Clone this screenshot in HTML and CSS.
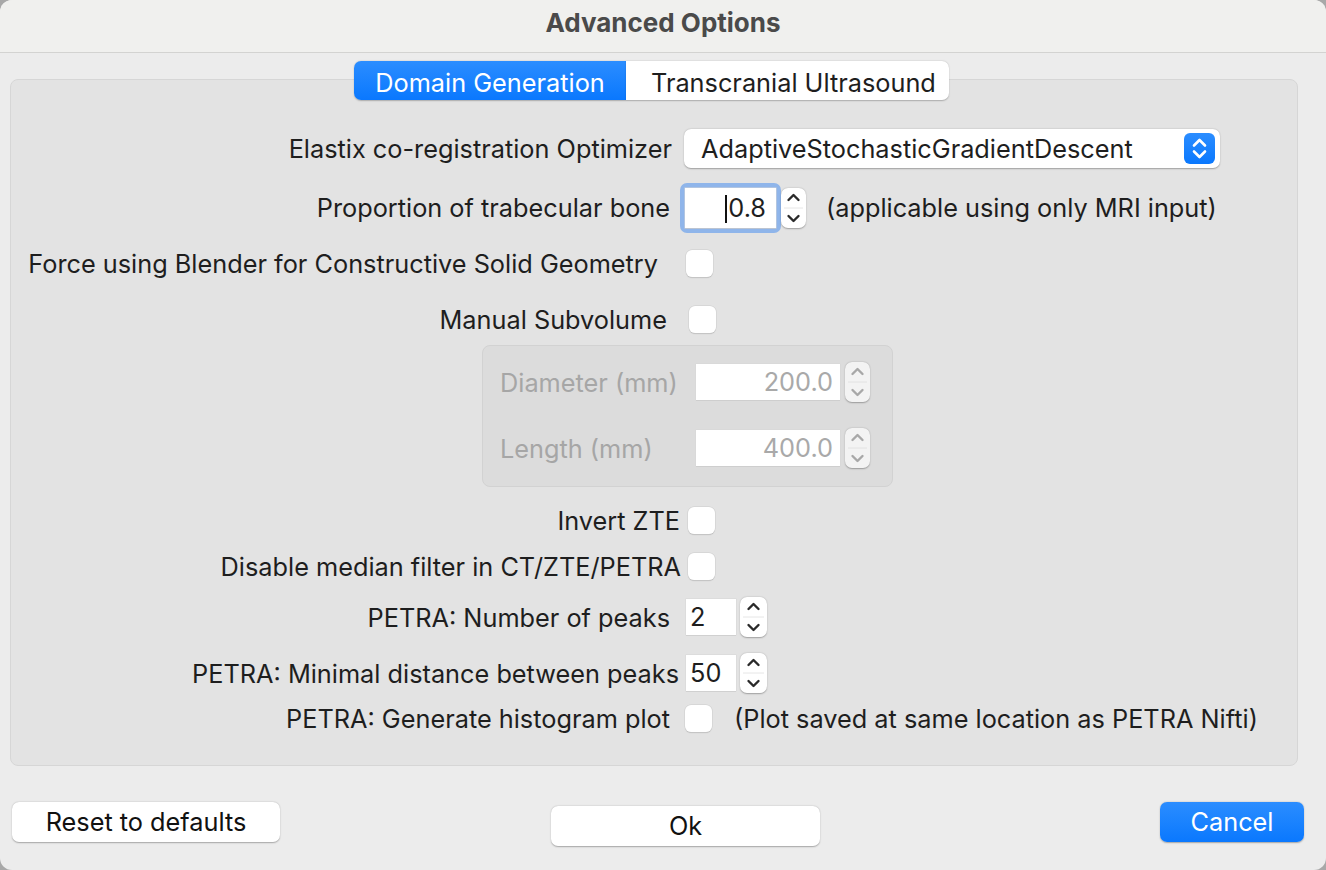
FILE: index.html
```html
<!DOCTYPE html>
<html>
<head>
<meta charset="utf-8">
<title>Advanced Options</title>
<link rel="stylesheet" href="styles.css">
</head>
<body>
<div class="window">
  <div class="titlebar">Advanced Options</div>
  <div class="content">
    <div class="tabs">
      <div class="tab active">Domain Generation</div>
      <div class="tab">Transcranial Ultrasound</div>
    </div>
    <div class="panel">
      <div class="row r-opt">
        <div class="lbl">Elastix co-registration Optimizer</div>
        <div class="combo">
          <span class="combo-text">AdaptiveStochasticGradientDescent</span>
          <span class="combo-btn">
            <svg width="31" height="31" viewBox="0 0 31 31"><path d="M10 12.5 L15.5 7 L21 12.5" fill="none" stroke="#fff" stroke-width="2.6" stroke-linecap="round" stroke-linejoin="round"/><path d="M10 18.5 L15.5 24 L21 18.5" fill="none" stroke="#fff" stroke-width="2.6" stroke-linecap="round" stroke-linejoin="round"/></svg>
          </span>
        </div>
      </div>

      <div class="row r-prop">
        <div class="lbl">Proportion of trabecular bone</div>
        <div class="focus">
          <div class="input num"><span class="caret"></span>0.8</div>
        </div>
        <div class="spin spin-prop">
          <svg width="25" height="40" viewBox="0 0 25 40"><path d="M7.5 12 L12.5 7 L17.5 12" fill="none" stroke="#2a2a2a" stroke-width="2.4" stroke-linecap="round" stroke-linejoin="round"/><line x1="3" y1="20" x2="22" y2="20" stroke="#e6e6e6" stroke-width="1"/><path d="M7.5 28 L12.5 33 L17.5 28" fill="none" stroke="#2a2a2a" stroke-width="2.4" stroke-linecap="round" stroke-linejoin="round"/></svg>
        </div>
        <div class="note note-prop">(applicable using only MRI input)</div>
      </div>

      <div class="row r-force">
        <div class="lbl">Force using Blender for Constructive Solid Geometry</div>
        <div class="check"></div>
      </div>

      <div class="row r-manual">
        <div class="lbl">Manual Subvolume</div>
        <div class="check"></div>
      </div>

      <div class="group">
        <div class="grow">
          <div class="glbl">Diameter (mm)</div>
          <div class="input dis">200.0</div>
          <div class="spin dis-spin">
            <svg width="25" height="40" viewBox="0 0 25 40"><path d="M7.5 12 L12.5 7 L17.5 12" fill="none" stroke="#a8a8a8" stroke-width="2.4" stroke-linecap="round" stroke-linejoin="round"/><line x1="3" y1="20" x2="22" y2="20" stroke="#e2e2e2" stroke-width="1"/><path d="M7.5 28 L12.5 33 L17.5 28" fill="none" stroke="#a8a8a8" stroke-width="2.4" stroke-linecap="round" stroke-linejoin="round"/></svg>
          </div>
        </div>
        <div class="grow grow2">
          <div class="glbl">Length (mm)</div>
          <div class="input dis">400.0</div>
          <div class="spin dis-spin">
            <svg width="25" height="40" viewBox="0 0 25 40"><path d="M7.5 12 L12.5 7 L17.5 12" fill="none" stroke="#a8a8a8" stroke-width="2.4" stroke-linecap="round" stroke-linejoin="round"/><line x1="3" y1="20" x2="22" y2="20" stroke="#e2e2e2" stroke-width="1"/><path d="M7.5 28 L12.5 33 L17.5 28" fill="none" stroke="#a8a8a8" stroke-width="2.4" stroke-linecap="round" stroke-linejoin="round"/></svg>
          </div>
        </div>
      </div>

      <div class="row r-invert">
        <div class="lbl">Invert ZTE</div>
        <div class="check"></div>
      </div>

      <div class="row r-median">
        <div class="lbl">Disable median filter in CT/ZTE/PETRA</div>
        <div class="check"></div>
      </div>

      <div class="row r-peaks">
        <div class="lbl">PETRA: Number of peaks</div>
        <div class="input small">2</div>
        <div class="spin">
          <svg width="27" height="40" viewBox="0 0 27 40"><path d="M8.5 12 L13.5 7 L18.5 12" fill="none" stroke="#2a2a2a" stroke-width="2.4" stroke-linecap="round" stroke-linejoin="round"/><line x1="3" y1="20" x2="24" y2="20" stroke="#e6e6e6" stroke-width="1"/><path d="M8.5 28 L13.5 33 L18.5 28" fill="none" stroke="#2a2a2a" stroke-width="2.4" stroke-linecap="round" stroke-linejoin="round"/></svg>
        </div>
      </div>

      <div class="row r-dist">
        <div class="lbl">PETRA: Minimal distance between peaks</div>
        <div class="input small">50</div>
        <div class="spin">
          <svg width="27" height="40" viewBox="0 0 27 40"><path d="M8.5 12 L13.5 7 L18.5 12" fill="none" stroke="#2a2a2a" stroke-width="2.4" stroke-linecap="round" stroke-linejoin="round"/><line x1="3" y1="20" x2="24" y2="20" stroke="#e6e6e6" stroke-width="1"/><path d="M8.5 28 L13.5 33 L18.5 28" fill="none" stroke="#2a2a2a" stroke-width="2.4" stroke-linecap="round" stroke-linejoin="round"/></svg>
        </div>
      </div>

      <div class="row r-hist">
        <div class="lbl">PETRA: Generate histogram plot</div>
        <div class="check"></div>
        <div class="note note-hist">(Plot saved at same location as PETRA Nifti)</div>
      </div>
    </div>

    <div class="buttons">
      <div class="btn btn-reset">Reset to defaults</div>
      <div class="btn btn-ok">Ok</div>
      <div class="btn btn-cancel">Cancel</div>
    </div>
  </div>
</div>
</body>
</html>
```

FILE: styles.css
```css
* { box-sizing: border-box; }
html, body { margin: 0; padding: 0; }
body {
  width: 1326px;
  height: 870px;
  background: #a8a8a8;
  font-family: Inter, "Liberation Sans", sans-serif;
  font-size: 25.3px;
  color: #1e1e1e;
  overflow: hidden;
}
.window {
  width: 1326px;
  height: 870px;
  border-radius: 12px;
  overflow: hidden;
  background: #ececec;
}
.titlebar {
  height: 53px;
  background: #f0f0ee;
  border-bottom: 1px solid #d3d3d1;
  text-align: center;
  font-weight: 700;
  color: #4a4a4a;
  font-size: 26px;
  line-height: 46px;
}
.content {
  padding-top: 8px;
}
.tabs {
  display: flex;
  justify-content: center;
  width: 1288px;
  margin-left: 10px;
  padding-right: 5px;
  margin-bottom: -21px;
  position: relative;
  z-index: 1;
}
.tab {
  height: 39px;
  line-height: 39px;
  padding-top: 2px;
  background: #fff;
  padding-left: 25px;
  color: #1e1e1e;
  border-radius: 0 7px 7px 0;
  box-shadow: 0 0.5px 1.5px rgba(0,0,0,0.25);
  width: 323px;
  white-space: nowrap;
}
.tab.active {
  background: linear-gradient(#2b8dff, #0a78fe);
  color: #fff;
  border-radius: 7px 0 0 7px;
  width: 272px;
  padding-left: 0;
  text-align: center;
}
.panel {
  margin-left: 10px;
  width: 1288px;
  height: 687px;
  background: #e3e3e3;
  border: 1px solid #d6d6d6;
  border-radius: 8px;
  padding-top: 49px;
}
.row {
  display: flex;
  align-items: center;
}
.lbl {
  width: 661px;
  text-align: right;
  white-space: nowrap;
  flex: 0 0 auto;
}
.r-opt { height: 39px; }
.r-opt .lbl { width: 661px; }
.combo {
  margin-left: 12px;
  width: 536px;
  height: 39px;
  background: #fff;
  border-radius: 7px;
  box-shadow: 0 0.5px 1.5px rgba(0,0,0,0.3);
  display: flex;
  align-items: center;
  padding-left: 17px;
  padding-right: 5px;
}
.combo-text { flex: 1; white-space: nowrap; }
.combo-btn {
  width: 31px;
  height: 31px;
  border-radius: 6px;
  background: linear-gradient(#2b8dff, #0a78fe);
  display: flex;
}

.r-prop { height: 51px; margin-top: 14px; }
.r-prop .lbl { width: 659px; }
.focus {
  margin-left: 10px;
  padding: 5px;
  background: #8fb5ea;
  border-radius: 7px;
}
.input {
  background: #fff;
  height: 40px;
  line-height: 40px;
  box-shadow: 0 0.5px 0 #c4c4c4, 0 0 0 0.5px #d6d6d6;
  white-space: nowrap;
}
.num {
  width: 91px;
  text-align: right;
  padding-right: 10px;
  position: relative;
}
.caret {
  display: inline-block;
  width: 2px;
  height: 28px;
  background: #111;
  vertical-align: -6px;
  margin-right: 1px;
}
.spin {
  width: 27px;
  height: 40px;
  background: #fff;
  border-radius: 7px;
  box-shadow: 0 0.5px 1.5px rgba(0,0,0,0.3);
  margin-left: 4px;
  display: flex;
}
.spin-prop { width: 25px; margin-left: 0; }
.note-prop { margin-left: 20px; white-space: nowrap; }

.r-force { height: 27px; margin-top: 17px; }
.r-force .lbl { width: 647px; }
.check {
  width: 27px;
  height: 27px;
  background: #fff;
  border-radius: 6px;
  box-shadow: 0 0 0 0.5px #cfcfcf, 0 0.5px 1px rgba(0,0,0,0.2);
  flex: 0 0 auto;
}
.r-force .check { margin-left: 28px; }

.r-manual { height: 27px; margin-top: 29px; }
.r-manual .lbl { width: 656px; }
.r-manual .check { margin-left: 22px; }

.group {
  margin-top: 12px;
  margin-left: 471px;
  width: 411px;
  height: 142px;
  background: #dcdcdc;
  border: 1px solid #d2d2d2;
  border-radius: 8px;
  padding-top: 16px;
  padding-left: 17px;
}
.grow {
  display: flex;
  align-items: center;
  height: 40px;
}
.grow2 { margin-top: 26px; }
.glbl {
  width: 196px;
  color: #a6a6a6;
  white-space: nowrap;
}
.input.dis {
  width: 144px;
  height: 36px;
  line-height: 36px;
  text-align: right;
  padding-right: 7px;
  color: #a9a9a9;
}
.dis-spin {
  width: 25px;
  background: #f3f3f3;
  margin-left: 5px;
}

.r-invert { height: 26px; margin-top: 20px; }
.r-invert .lbl { width: 669px; }
.r-invert .check { margin-left: 8px; }

.r-median { height: 27px; margin-top: 20px; }
.r-median .lbl { width: 670px; }
.r-median .check { margin-left: 7px; }

.r-peaks { height: 40px; margin-top: 17px; }
.r-peaks .lbl { width: 659px; }
.input.small {
  width: 50px;
  height: 36px;
  line-height: 36px;
  padding-left: 4px;
  margin-left: 16px;
}
.r-dist { height: 40px; margin-top: 16px; }
.r-dist .lbl { width: 668px; }
.r-dist .input.small { margin-left: 7px; }

.r-hist { height: 27px; margin-top: 12px; }
.r-hist .lbl { width: 659px; }
.r-hist .check { margin-left: 15px; }
.note-hist { margin-left: 22px; white-space: nowrap; }

.buttons {
  display: flex;
  align-items: flex-start;
  padding: 36px 22px 0 12px;
}
.btn {
  height: 40px;
  line-height: 40px;
  background: #fff;
  border-radius: 7px;
  box-shadow: 0 0.5px 1.5px rgba(0,0,0,0.3);
  text-align: center;
  color: #111;
}
.btn-reset { width: 268px; }
.btn-ok { width: 269px; margin-left: 271px; margin-top: 4px; }
.btn-cancel {
  width: 144px;
  margin-left: auto;
  background: linear-gradient(#2b8dff, #0a78fe);
  color: #fff;
}
```
